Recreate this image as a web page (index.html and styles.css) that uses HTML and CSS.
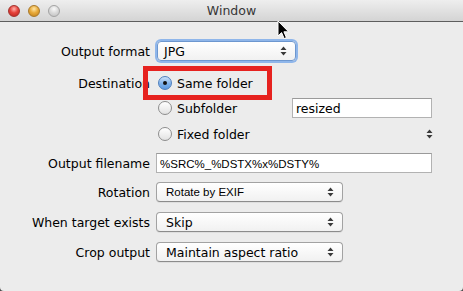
FILE: index.html
```html
<!DOCTYPE html>
<html lang="en">

<head>
    <meta charset="UTF-8">
    <title>Window</title>
    <link rel="stylesheet" href="styles.css">
</head>

<body>
    <div class="window">
        <!-- Title bar -->
        <div class="titlebar">
            <div class="lights">
                <span class="light close"></span>
                <span class="light minimize"></span>
                <span class="light zoom"></span>
            </div>
            <div class="title">Window</div>
            <div></div>
        </div>

        <!-- Settings form -->
        <div class="form">
            <div class="row">
                <span class="label">Output format</span>
                <div class="popup popup-focus popup-narrow">
                    <span>JPG</span>
                    <svg class="arrows" width="7" height="10" viewBox="0 0 7 10"><path d="M3.5 0.5 L6.5 4 L0.5 4 Z M3.5 9.5 L6.5 6 L0.5 6 Z" /></svg>
                </div>
            </div>

            <div class="row row-dest">
                <span class="label">Destination</span>
                <div class="radio-item"><span class="radio checked"></span>Same folder</div>
            </div>

            <div class="row row-sub">
                <span class="label"></span>
                <div class="radio-item"><span class="radio"></span>Subfolder</div>
                <div class="field field-sub">resized</div>
            </div>

            <div class="row row-fixed">
                <span class="label"></span>
                <div class="radio-item"><span class="radio"></span>Fixed folder</div>
                <svg class="arrows stepper" width="7" height="10" viewBox="0 0 7 10"><path d="M3.5 0.5 L6.5 4 L0.5 4 Z M3.5 9.5 L6.5 6 L0.5 6 Z" /></svg>
            </div>

            <div class="row row-mid">
                <span class="label">Output filename</span>
                <div class="field field-wide">%SRC%_%DSTX%x%DSTY%</div>
            </div>

            <div class="row row-mid">
                <span class="label">Rotation</span>
                <div class="popup">
                    <span class="small-text">Rotate by EXIF</span>
                    <svg class="arrows" width="7" height="10" viewBox="0 0 7 10"><path d="M3.5 0.5 L6.5 4 L0.5 4 Z M3.5 9.5 L6.5 6 L0.5 6 Z" /></svg>
                </div>
            </div>

            <div class="row row-wide">
                <span class="label">When target exists</span>
                <div class="popup">
                    <span>Skip</span>
                    <svg class="arrows" width="7" height="10" viewBox="0 0 7 10"><path d="M3.5 0.5 L6.5 4 L0.5 4 Z M3.5 9.5 L6.5 6 L0.5 6 Z" /></svg>
                </div>
            </div>

            <div class="row row-wide">
                <span class="label">Crop output</span>
                <div class="popup">
                    <span>Maintain aspect ratio</span>
                    <svg class="arrows" width="7" height="10" viewBox="0 0 7 10"><path d="M3.5 0.5 L6.5 4 L0.5 4 Z M3.5 9.5 L6.5 6 L0.5 6 Z" /></svg>
                </div>
            </div>
        </div>

        <!-- Annotation box over the selected radio -->
        <div class="highlight"></div>

        <!-- Mouse pointer -->
        <svg class="cursor" width="13" height="20" viewBox="0 0 13 20">
            <path d="M1 1 L1 16 L4.6 12.6 L7.2 18.6 L9.4 17.6 L6.9 11.8 L11.6 11.8 Z" fill="#000" stroke="#fff" stroke-width="1" stroke-linejoin="round" />
        </svg>
    </div>
</body>

</html>
```

FILE: styles.css
```css
body {
    margin: 0;
    padding: 0;
    background-color: #4a4a4a;
    font-family: "DejaVu Sans", sans-serif;
    font-size: 12.5px;
    color: #000;
}

.window {
    position: relative;
    width: 463px;
    height: 291px;
    background-color: #ececec;
    border-radius: 0 0 4px 4px;
    overflow: hidden;
}

.titlebar {
    display: grid;
    grid-template-columns: 1fr auto 1fr;
    align-items: center;
    height: 21px;
    background: linear-gradient(#eeeeee, #d4d4d4);
    border-bottom: 1px solid #5e5e5e;
}

.lights {
    display: flex;
    gap: 8px;
    padding-left: 8px;
}

.light {
    width: 12px;
    height: 12px;
    border-radius: 50%;
    box-sizing: border-box;
}

.close {
    background: radial-gradient(circle at 50% 30%, #ffb4ae 0, #e6433b 45%, #b8231c 100%);
    border: 1px solid #a3322d;
}

.minimize {
    background: radial-gradient(circle at 50% 30%, #ffe7a8 0, #e8ab3c 45%, #c07e17 100%);
    border: 1px solid #a8792a;
}

.zoom {
    background: radial-gradient(circle at 50% 30%, #fafafa 0, #d8d8d8 50%, #bdbdbd 100%);
    border: 1px solid #a3a3a3;
}

.title {
    color: #363636;
    font-size: 12.5px;
}

.form {
    display: flex;
    flex-direction: column;
    padding: 19px 31px 0 0;
}

.row {
    display: flex;
    align-items: center;
    height: 20px;
}

.row-dest {
    margin-top: 12px;
}

.row-sub {
    margin-top: 5px;
}

.row-fixed {
    margin-top: 6px;
}

.row-mid {
    margin-top: 9px;
}

.row-wide {
    margin-top: 10px;
}

.label {
    width: 150px;
    margin-right: 6px;
    text-align: right;
    white-space: nowrap;
}

.popup {
    display: flex;
    align-items: center;
    justify-content: space-between;
    box-sizing: border-box;
    width: 187px;
    height: 20px;
    padding: 0 8px 0 9px;
    background: linear-gradient(#ffffff, #f1f1f1);
    border: 1px solid #a2a2a2;
    border-bottom-color: #8c8c8c;
    border-radius: 4px;
    box-shadow: 0 1px 0 rgba(0, 0, 0, 0.06);
}

.popup-narrow {
    width: 139px;
    margin-left: 1px;
    padding-left: 6px;
}

.popup-focus {
    border-color: #6d97cf;
    box-shadow: 0 0 0 2px #8fb6ea;
}

.small-text {
    font-family: "Liberation Sans", sans-serif;
    font-size: 11.5px;
}

.arrows {
    fill: #3a3a3a;
}

.stepper {
    margin-left: auto;
    margin-right: -1px;
}

.radio-item {
    display: flex;
    align-items: center;
    width: 134px;
    padding-left: 2px;
}

.radio {
    box-sizing: border-box;
    width: 14px;
    height: 14px;
    margin-right: 5px;
    border-radius: 50%;
    border: 1px solid #8d8d8d;
    background: linear-gradient(#ffffff, #e2e2e2);
}

.radio.checked {
    display: flex;
    align-items: center;
    justify-content: center;
    border-color: #4f7fbd;
    background: linear-gradient(#cde1f8, #7fb2ec 55%, #5d9ae2);
}

.radio.checked::after {
    content: "";
    width: 4px;
    height: 4px;
    border-radius: 50%;
    background-color: #111;
}

.field {
    box-sizing: border-box;
    height: 20px;
    padding: 1px 3px 0 3px;
    line-height: 18px;
    background-color: #fff;
    border: 1px solid #b2b2b2;
    border-top-color: #9a9a9a;
}

.field-sub {
    flex: 1;
}

.field-wide {
    flex: 1;
    font-family: "Liberation Sans", sans-serif;
    font-size: 11.5px;
}

.highlight {
    position: absolute;
    left: 143px;
    top: 66px;
    width: 129px;
    height: 34px;
    box-sizing: border-box;
    border: 5px solid #e6221f;
}

.cursor {
    position: absolute;
    left: 277px;
    top: 20px;
}
```
